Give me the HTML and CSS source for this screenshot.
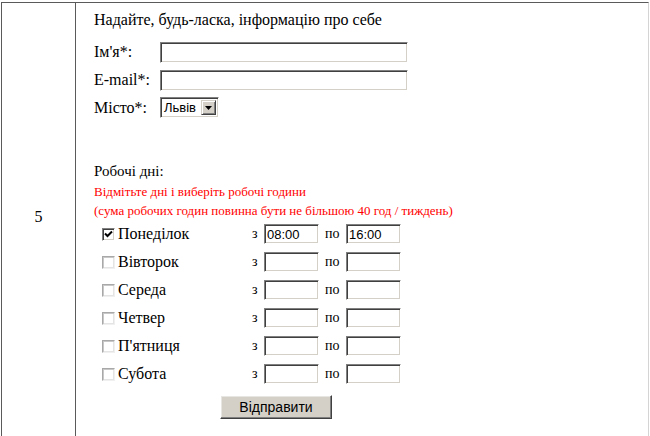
FILE: index.html
```html
<!DOCTYPE html>
<html lang="uk">
<head>
<meta charset="utf-8">
<title>Форма</title>
<link rel="stylesheet" href="styles.css">
</head>
<body>
<div class="table">
  <div class="num">5</div>
  <div class="content">
    <div class="title">Надайте, будь-ласка, інформацію про себе</div>
    <div class="frow"><span class="flabel">Ім'я*:</span><input class="text wide" type="text"></div>
    <div class="frow"><span class="flabel">E-mail*:</span><input class="text wide" type="text"></div>
    <div class="frow"><span class="flabel">Місто*:</span>
      <div class="select"><span class="sval">Львів</span><span class="sbtn"><svg width="7" height="4" viewBox="0 0 7 4"><path d="M0 0H7L3.5 4Z" fill="#000"/></svg></span></div>
    </div>
    <div class="heading">Робочі дні:</div>
    <div class="note">Відмітьте дні і виберіть робочі години<br>(сума робочих годин повинна бути не більшою 40 год / тиждень)</div>
    <div class="days">
      <div class="day"><span class="daylab"><span class="cb on"><svg width="9" height="9" viewBox="0 0 9 9"><path d="M1 3.5L3.5 6L8 1.5" stroke="#000" stroke-width="2" fill="none"/></svg></span>Понеділок</span><span class="z">з</span><input class="text time" type="text" value="08:00"><span class="po">по</span><input class="text time" type="text" value="16:00"></div>
      <div class="day"><span class="daylab"><span class="cb"></span>Вівторок</span><span class="z">з</span><input class="text time" type="text"><span class="po">по</span><input class="text time" type="text"></div>
      <div class="day"><span class="daylab"><span class="cb"></span>Середа</span><span class="z">з</span><input class="text time" type="text"><span class="po">по</span><input class="text time" type="text"></div>
      <div class="day"><span class="daylab"><span class="cb"></span>Четвер</span><span class="z">з</span><input class="text time" type="text"><span class="po">по</span><input class="text time" type="text"></div>
      <div class="day"><span class="daylab"><span class="cb"></span>П'ятниця</span><span class="z">з</span><input class="text time" type="text"><span class="po">по</span><input class="text time" type="text"></div>
      <div class="day"><span class="daylab"><span class="cb"></span>Субота</span><span class="z">з</span><input class="text time" type="text"><span class="po">по</span><input class="text time" type="text"></div>
    </div>
    <button class="btn" type="button">Відправити</button>
  </div>
</div>
</body>
</html>
```
FILE: styles.css
```css
html, body { margin: 0; padding: 0; background: #fff; }
body { font-family: "Liberation Serif", "Times New Roman", Times, serif; font-size: 16px; color: #000; }

.table {
  display: grid;
  grid-template-columns: 74px 1fr;
  margin: 2px 1px 0 1px;
  border-top: 1px solid #5a5a5a;
  border-left: 1px solid #5a5a5a;
  border-right: 1px solid #d4d4d4;
  border-bottom: 1px solid #5a5a5a;
}
.num {
  border-right: 1px solid #5a5a5a;
  display: flex;
  align-items: center;
  justify-content: center;
  font-size: 16px;
  padding-bottom: 6px;
}
.content {
  padding: 6px 0 18px 18px;
  display: flex;
  flex-direction: column;
  align-items: flex-start;
}
.title { line-height: 22px; margin-bottom: 7px; }
.frow { display: flex; align-items: center; height: 28px; }
.frow:nth-of-type(4) { height: 27px; }
.flabel { width: 66px; }

.text {
  box-sizing: border-box;
  appearance: none;
  margin: 0;
  padding: 0 0 0 2px;
  background: #fff;
  border: 1px solid;
  border-color: #808080 #fff #fff #808080;
  box-shadow: inset 1px 1px 0 #404040, inset -1px -1px 0 #d4d0c8;
  font-family: "Liberation Sans", Arial, sans-serif;
  font-size: 13px;
  color: #000;
  outline: none;
}
.wide { width: 248px; height: 21px; }
.time { width: 55px; height: 20px; }

.select {
  box-sizing: border-box;
  width: 59px;
  height: 21px;
  display: flex;
  align-items: stretch;
  border: 1px solid;
  border-color: #808080 #fff #fff #808080;
  box-shadow: inset 1px 1px 0 #404040, inset -1px -1px 0 #d4d0c8;
  padding: 2px;
  background: #fff;
}
.sval {
  flex: 1;
  font-family: "Liberation Sans", Arial, sans-serif;
  font-size: 13px;
  line-height: 15px;
  padding-left: 1px;
}
.sbtn {
  box-sizing: border-box;
  width: 15px;
  background: #d4d0c8;
  border: 1px solid;
  border-color: #d4d0c8 #404040 #404040 #d4d0c8;
  box-shadow: inset 1px 1px 0 #fff, inset -1px -1px 0 #808080;
  display: flex;
  align-items: center;
  justify-content: center;
}

.heading { margin-top: 40px; line-height: 20px; font-size: 15px; }
.note {
  margin-top: 1px;
  color: #ff0000;
  font-size: 13px;
  line-height: 19px;
}
.days { display: flex; flex-direction: column; margin-left: 8px; }
.day { display: flex; align-items: center; height: 28px; }
.daylab { width: 150px; display: flex; align-items: center; }
.cb {
  box-sizing: border-box;
  width: 13px;
  height: 13px;
  margin-right: 3px;
  border: 1px solid;
  border-color: #a8a8a8 #f0f0f0 #f0f0f0 #a8a8a8;
  box-shadow: inset 1px 1px 0 #c8c8c8, inset -1px -1px 0 #e4e4e4;
  background: #fff;
  display: flex;
  align-items: center;
  justify-content: center;
}
.cb.on {
  border-color: #808080 #fff #fff #808080;
  box-shadow: inset 1px 1px 0 #404040, inset -1px -1px 0 #d4d0c8;
}
.z { width: 12px; font-size: 14px; }
.po { width: 27px; font-size: 14px; padding-left: 6px; box-sizing: border-box; }

.btn {
  margin: 7px 0 0 126px;
  box-sizing: border-box;
  width: 112px;
  height: 24px;
  padding: 0;
  background: #d4d0c8;
  border: 1px solid;
  border-color: #fff #404040 #404040 #fff;
  box-shadow: inset -1px -1px 0 #808080, inset 1px 1px 0 #e8e6e2;
  font-family: "Liberation Sans", Arial, sans-serif;
  font-size: 14px;
  color: #000;
}
```
